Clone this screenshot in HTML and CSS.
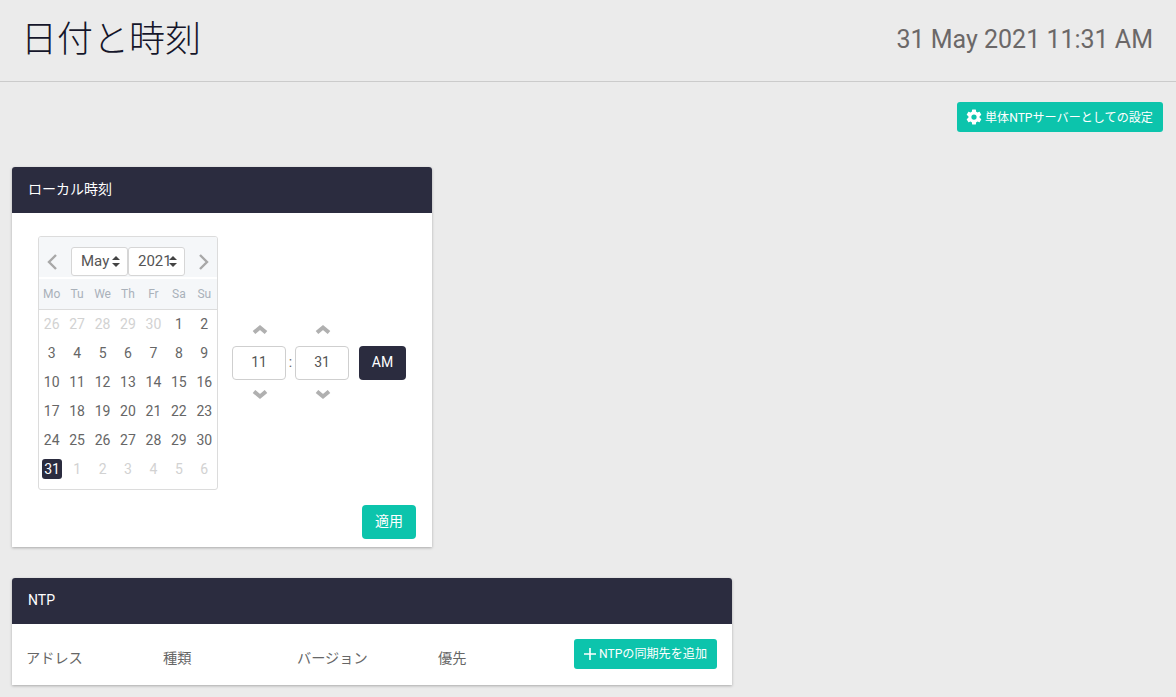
FILE: index.html
```html
<!DOCTYPE html>
<html lang="ja">
<head>
    <meta charset="UTF-8">
    <meta name="viewport" content="width=device-width, initial-scale=1.0">
    <title>日付と時刻</title>
    <link rel="stylesheet" href="styles.css">
</head>
<body>
    <header class="page-header">
        <h1 class="page-title">日付と時刻</h1>
        <div class="current-time">31 May 2021 11:31 AM</div>
    </header>

    <div class="toolbar">
        <button class="btn btn-small btn-standalone">
            <svg class="btn-icon" viewBox="0 0 24 24" width="18" height="18"><path fill="#fff" d="M19.4 13c.04-.33.1-.66.1-1s-.06-.67-.1-1l2.1-1.65c.2-.15.25-.42.13-.64l-2-3.46c-.12-.22-.39-.3-.61-.22l-2.49 1c-.52-.4-1.08-.73-1.69-.98l-.38-2.65A.49.49 0 0 0 14 2h-4c-.25 0-.46.18-.49.42l-.38 2.65c-.61.25-1.17.59-1.69.98l-2.49-1c-.23-.09-.49 0-.61.22l-2 3.46c-.13.22-.07.49.12.64L4.57 11c-.04.33-.07.66-.07 1s.03.67.07 1l-2.11 1.65c-.19.15-.25.42-.12.64l2 3.46c.12.22.39.3.61.22l2.49-1c.52.4 1.08.73 1.69.98l.38 2.65c.03.24.24.42.49.42h4c.25 0 .46-.18.49-.42l.38-2.65c.61-.25 1.17-.59 1.69-.98l2.49 1c.23.09.49 0 .61-.22l2-3.46c.12-.22.07-.49-.13-.64L19.4 13zM12 15.5a3.5 3.5 0 1 1 0-7 3.5 3.5 0 0 1 0 7z"/></svg>
            <span>単体NTPサーバーとしての設定</span>
        </button>
    </div>

    <section class="panel panel-local">
        <div class="panel-head">ローカル時刻</div>
        <div class="panel-body">
            <div class="picker-row">
                <div class="calendar">
                    <div class="cal-top">
                        <svg class="cal-arrow" viewBox="0 0 12 18" width="12" height="18"><path d="M10 2 3 9l7 7" fill="none" stroke="#a8a8a8" stroke-width="2.4"/></svg>
                        <div class="cal-selects">
                            <div class="cal-select">May<span class="updown"></span></div>
                            <div class="cal-select">2021<span class="updown"></span></div>
                        </div>
                        <svg class="cal-arrow" viewBox="0 0 12 18" width="12" height="18"><path d="m2 2 7 7-7 7" fill="none" stroke="#a8a8a8" stroke-width="2.4"/></svg>
                    </div>
                    <div class="cal-grid cal-days">
                        <span>Mo</span><span>Tu</span><span>We</span><span>Th</span><span>Fr</span><span>Sa</span><span>Su</span>
                    </div>
                    <div class="cal-grid cal-dates">
                        <span class="muted">26</span><span class="muted">27</span><span class="muted">28</span><span class="muted">29</span><span class="muted">30</span><span>1</span><span>2</span>
                        <span>3</span><span>4</span><span>5</span><span>6</span><span>7</span><span>8</span><span>9</span>
                        <span>10</span><span>11</span><span>12</span><span>13</span><span>14</span><span>15</span><span>16</span>
                        <span>17</span><span>18</span><span>19</span><span>20</span><span>21</span><span>22</span><span>23</span>
                        <span>24</span><span>25</span><span>26</span><span>27</span><span>28</span><span>29</span><span>30</span>
                        <span class="today">31</span><span class="muted">1</span><span class="muted">2</span><span class="muted">3</span><span class="muted">4</span><span class="muted">5</span><span class="muted">6</span>
                    </div>
                </div>

                <div class="time">
                    <div class="spinner">
                        <svg viewBox="0 0 16 10" width="16" height="10"><path d="M2 8.5l6-5 6 5" fill="none" stroke="#b0b0b0" stroke-width="4"/></svg>
                        <div class="time-input">11</div>
                        <svg viewBox="0 0 16 10" width="16" height="10"><path d="M2 1.5l6 5 6-5" fill="none" stroke="#b0b0b0" stroke-width="4"/></svg>
                    </div>
                    <span class="colon">:</span>
                    <div class="spinner">
                        <svg viewBox="0 0 16 10" width="16" height="10"><path d="M2 8.5l6-5 6 5" fill="none" stroke="#b0b0b0" stroke-width="4"/></svg>
                        <div class="time-input">31</div>
                        <svg viewBox="0 0 16 10" width="16" height="10"><path d="M2 1.5l6 5 6-5" fill="none" stroke="#b0b0b0" stroke-width="4"/></svg>
                    </div>
                    <button class="btn-ampm">AM</button>
                </div>
            </div>
            <div class="panel-actions">
                <button class="btn btn-apply">適用</button>
            </div>
        </div>
    </section>

    <section class="panel panel-ntp">
        <div class="panel-head">NTP</div>
        <div class="ntp-row">
            <div class="ntp-col col-address">アドレス</div>
            <div class="ntp-col col-type">種類</div>
            <div class="ntp-col col-version">バージョン</div>
            <div class="ntp-col col-priority">優先</div>
            <button class="btn btn-small btn-add">
                <svg class="btn-icon" viewBox="0 0 12 12" width="12" height="12"><path d="M6 0v12M0 6h12" stroke="#fff" stroke-width="1.6"/></svg>
                <span>NTPの同期先を追加</span>
            </button>
        </div>
    </section>
</body>
</html>
```

FILE: styles.css
```css
* {
    margin: 0;
    padding: 0;
    box-sizing: border-box;
}

html, body {
    height: 697px;
    overflow: hidden;
}

body {
    background: #ebebeb;
    font-family: Roboto, "Noto Sans CJK JP", sans-serif;
    color: #666;
}

button {
    font-family: inherit;
    border: none;
}

.page-header {
    height: 82px;
    display: flex;
    justify-content: space-between;
    align-items: center;
    padding: 0 23px 0 21px;
    border-bottom: 1px solid #cbcbcb;
}

.page-title {
    font-size: 36px;
    font-weight: 300;
    color: #15162a;
    line-height: 1;
    margin-top: -1px;
}

.current-time {
    font-size: 25px;
    color: #6b6868;
    margin-top: -3px;
}

.toolbar {
    display: flex;
    justify-content: flex-end;
    padding: 20px 13px 0;
    height: 85px;
}

.btn {
    background: #0cc4ac;
    color: #fff;
    border-radius: 3px;
    display: flex;
    align-items: center;
    justify-content: center;
}

.btn-small {
    height: 30px;
    font-size: 12.1px;
    font-weight: 400;
    gap: 2px;
}

.btn-small span {
    margin-top: -2px;
}

.btn-standalone {
    width: 206px;
    justify-content: flex-start;
    padding-left: 8px;
}

.panel {
    background: #fff;
    margin-left: 12px;
    border-radius: 3px 3px 0 0;
    box-shadow: 0 1px 3px rgba(0, 0, 0, 0.28);
}

.panel-local {
    width: 420px;
    height: 380px;
    margin-bottom: 31px;
}

.panel-ntp {
    width: 720px;
    height: 107px;
}

.panel-head {
    height: 46px;
    background: #2b2c3f;
    color: #fff;
    border-radius: 3px 3px 0 0;
    font-size: 14px;
    line-height: 44px;
    padding-left: 16px;
}

.panel-body {
    padding: 23px 16px 8px 26px;
}

.picker-row {
    display: flex;
    align-items: center;
    height: 254px;
}

.calendar {
    width: 180px;
    height: 254px;
    border: 1px solid #dcdcdc;
    border-radius: 3px;
    overflow: hidden;
}

.cal-top {
    height: 40px;
    background: #f5f7f9;
    display: flex;
    align-items: flex-end;
    justify-content: space-between;
    padding: 0 7px 1px;
}

.cal-arrow {
    margin-bottom: 5px;
}

.cal-selects {
    display: flex;
}

.cal-select {
    width: 57px;
    height: 29px;
    background: #fff;
    border: 1px solid #d6d6d6;
    border-radius: 3px;
    font-size: 15px;
    line-height: 27px;
    padding-left: 9px;
    color: #555;
    position: relative;
}

.updown {
    position: absolute;
    right: 7px;
    top: 8px;
    width: 8px;
    height: 11px;
}

.updown::before,
.updown::after {
    content: '';
    position: absolute;
    left: 0;
    border-left: 4px solid transparent;
    border-right: 4px solid transparent;
}

.updown::before {
    top: 0;
    border-bottom: 4px solid #444;
}

.updown::after {
    bottom: 0;
    border-top: 4px solid #444;
}

.cal-grid {
    display: grid;
    grid-template-columns: repeat(7, 1fr);
    text-align: center;
}

.cal-days {
    height: 33px;
    background: #f5f7f9;
    border-top: 2px solid #fff;
    border-bottom: 1px solid #dcdcdc;
    font-size: 12px;
    line-height: 30px;
    color: #a9b1ba;
}

.cal-dates {
    grid-auto-rows: 29px;
    font-size: 14px;
    line-height: 29px;
    color: #666;
}

.cal-dates span {
    display: block;
}

.cal-dates .muted {
    color: #d2d2d2;
}

.cal-dates .today {
    background: #2b2c3f;
    color: #fff;
    border-radius: 3px;
    height: 20px;
    line-height: 20px;
    width: 20px;
    margin: 4px 0 0 3px;
}

.time {
    display: flex;
    align-items: center;
    margin-left: 14px;
    margin-top: -2px;
}

.spinner {
    display: flex;
    flex-direction: column;
    align-items: center;
    gap: 10px;
}

.spinner svg {
    margin-left: 2px;
}

.spinner svg:first-child {
    margin-bottom: 2px;
}

.time-input {
    width: 54px;
    height: 34px;
    border: 1px solid #cfcfcf;
    border-radius: 4px;
    text-align: center;
    line-height: 31px;
    font-size: 14px;
    color: #555;
}

.colon {
    width: 9px;
    text-align: center;
    font-size: 14px;
    margin-top: -1px;
}

.btn-ampm {
    width: 47px;
    height: 34px;
    margin-left: 10px;
    margin-top: 2px;
    padding-bottom: 2px;
    background: #2b2c3f;
    color: #fff;
    border-radius: 4px;
    font-size: 14px;
}

.panel-actions {
    display: flex;
    justify-content: flex-end;
    margin-top: 15px;
}

.btn-apply {
    width: 54px;
    height: 34px;
    border-radius: 4px;
    font-size: 14px;
    padding-bottom: 5px;
}

.ntp-row {
    display: flex;
    align-items: center;
    height: 61px;
    padding-left: 14px;
}

.ntp-col {
    font-size: 14.2px;
    color: #666;
    margin-top: 4px;
}

.col-address { width: 137px; }
.col-type { width: 134px; }
.col-version { width: 141px; }
.col-priority { width: 136px; }

.btn-add {
    width: 143px;
    margin-bottom: 2px;
    gap: 3px;
}
```
